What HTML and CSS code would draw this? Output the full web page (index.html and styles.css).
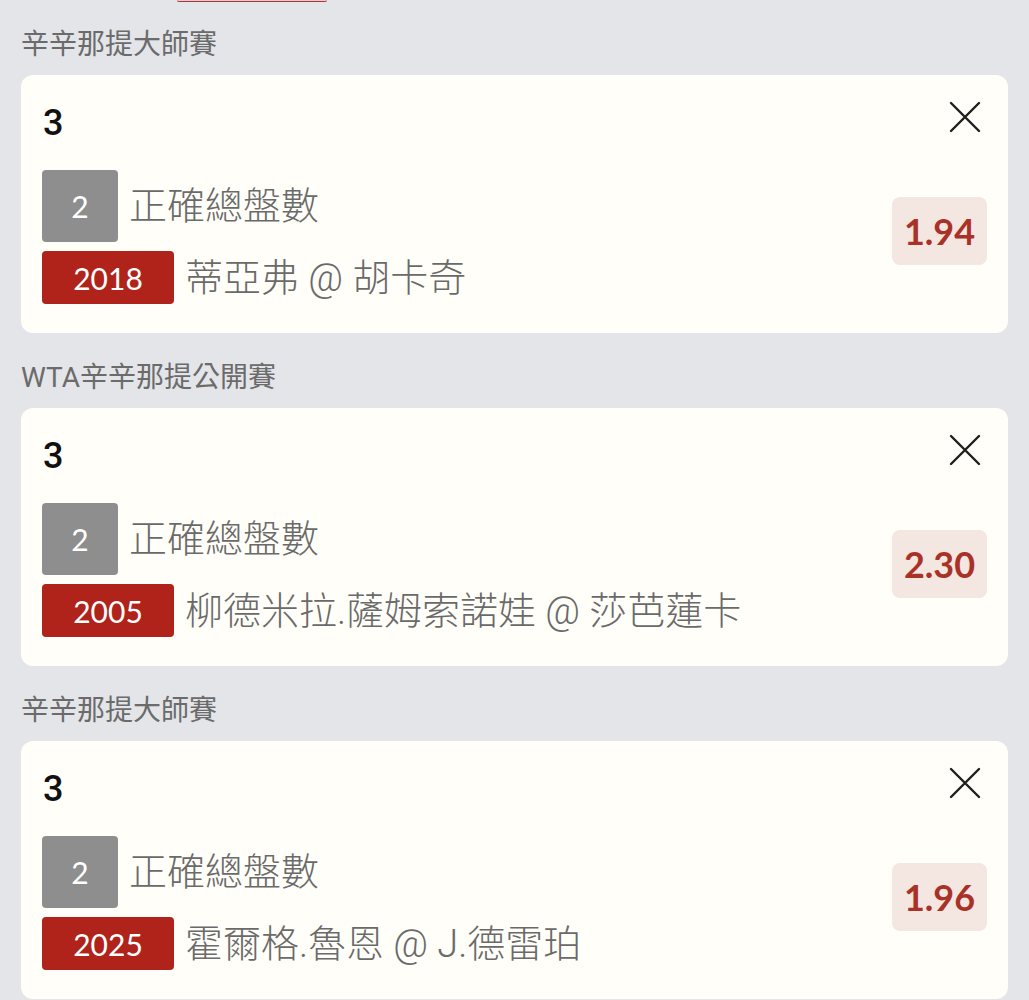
FILE: index.html
```html
<!DOCTYPE html>
<html lang="zh-Hant">
<head>
  <meta charset="UTF-8">
  <title>投注單</title>
  <link rel="stylesheet" href="styles.css">
</head>
<body>
  <div class="tab-edge"></div>

  <div class="slip">
    <div class="league">辛辛那提大師賽</div>
    <div class="bet">
      <div class="bet-head">
        <span class="bet-no">3</span>
        <svg class="close" viewBox="0 0 32 32" width="32" height="32">
          <path d="M2 2 L30 30 M30 2 L2 30" stroke="#1e1e1e" stroke-width="2.4" fill="none" stroke-linecap="round"/>
        </svg>
      </div>
      <div class="bet-body">
        <div class="bet-lines">
          <div class="line">
            <span class="tag tag-grey">2</span>
            <span class="line-text">正確總盤數</span>
          </div>
          <div class="line">
            <span class="tag tag-red">2018</span>
            <span class="line-text">蒂亞弗 @ 胡卡奇</span>
          </div>
        </div>
        <div class="odds">1.94</div>
      </div>
    </div>

    <div class="league">WTA辛辛那提公開賽</div>
    <div class="bet">
      <div class="bet-head">
        <span class="bet-no">3</span>
        <svg class="close" viewBox="0 0 32 32" width="32" height="32">
          <path d="M2 2 L30 30 M30 2 L2 30" stroke="#1e1e1e" stroke-width="2.4" fill="none" stroke-linecap="round"/>
        </svg>
      </div>
      <div class="bet-body">
        <div class="bet-lines">
          <div class="line">
            <span class="tag tag-grey">2</span>
            <span class="line-text">正確總盤數</span>
          </div>
          <div class="line">
            <span class="tag tag-red">2005</span>
            <span class="line-text">柳德米拉.薩姆索諾娃 @ 莎芭蓮卡</span>
          </div>
        </div>
        <div class="odds">2.30</div>
      </div>
    </div>

    <div class="league">辛辛那提大師賽</div>
    <div class="bet">
      <div class="bet-head">
        <span class="bet-no">3</span>
        <svg class="close" viewBox="0 0 32 32" width="32" height="32">
          <path d="M2 2 L30 30 M30 2 L2 30" stroke="#1e1e1e" stroke-width="2.4" fill="none" stroke-linecap="round"/>
        </svg>
      </div>
      <div class="bet-body">
        <div class="bet-lines">
          <div class="line">
            <span class="tag tag-grey">2</span>
            <span class="line-text">正確總盤數</span>
          </div>
          <div class="line">
            <span class="tag tag-red">2025</span>
            <span class="line-text">霍爾格.魯恩 @ J.德雷珀</span>
          </div>
        </div>
        <div class="odds">1.96</div>
      </div>
    </div>
  </div>
</body>
</html>
```

FILE: styles.css
```css
body {
  margin: 0;
  background: #e4e5e9;
  font-family: Roboto, "Noto Sans CJK TC", sans-serif;
  color: #666;
  overflow: hidden;
}

.tab-edge {
  width: 150px;
  height: 1px;
  margin-left: 177px;
  background: #f3caca;
  border-bottom: 1px solid #a23a3a;
  border-radius: 0 0 4px 4px;
}

.slip {
  padding: 0 21px;
}

.league {
  font-size: 28px;
  line-height: 36px;
  margin: 25px 0 12px 0;
  color: #6b6b6b;
}

.bet + .league {
  margin-top: 27px;
}

.bet {
  background: #fffef8;
  border-radius: 12px;
  padding: 24px 21px 29px 21px;
}

.bet-head {
  display: flex;
  justify-content: space-between;
  align-items: flex-start;
  height: 48px;
}

.bet-no {
  font-size: 36px;
  line-height: 48px;
  font-weight: 500;
  color: #111;
  margin-left: 1px;
}

.close {
  margin-top: 2px;
  margin-right: 6px;
}

.bet-body {
  display: flex;
  justify-content: space-between;
  align-items: flex-start;
  margin-top: 23px;
}

.bet-lines {
  display: flex;
  flex-direction: column;
  gap: 9px;
}

.line {
  display: flex;
  align-items: center;
  gap: 11px;
}

.tag {
  display: flex;
  align-items: center;
  justify-content: center;
  font-family: Lato, sans-serif;
  font-size: 30px;
  color: #fff;
  border-radius: 4px;
}

.tag-grey {
  width: 76px;
  height: 72px;
  background: #8e8e8e;
}

.tag-red {
  width: 132px;
  height: 53px;
  background: #b0231a;
}

.line-text {
  font-size: 38px;
  line-height: 48px;
  font-weight: 300;
  color: #6a6a6a;
}

.odds {
  margin-top: 27px;
  width: 95px;
  height: 68px;
  display: flex;
  align-items: center;
  justify-content: center;
  background: #f4e6e0;
  border-radius: 8px;
  font-family: Lato, sans-serif;
  font-weight: 700;
  font-size: 36px;
  color: #a93228;
}
```
